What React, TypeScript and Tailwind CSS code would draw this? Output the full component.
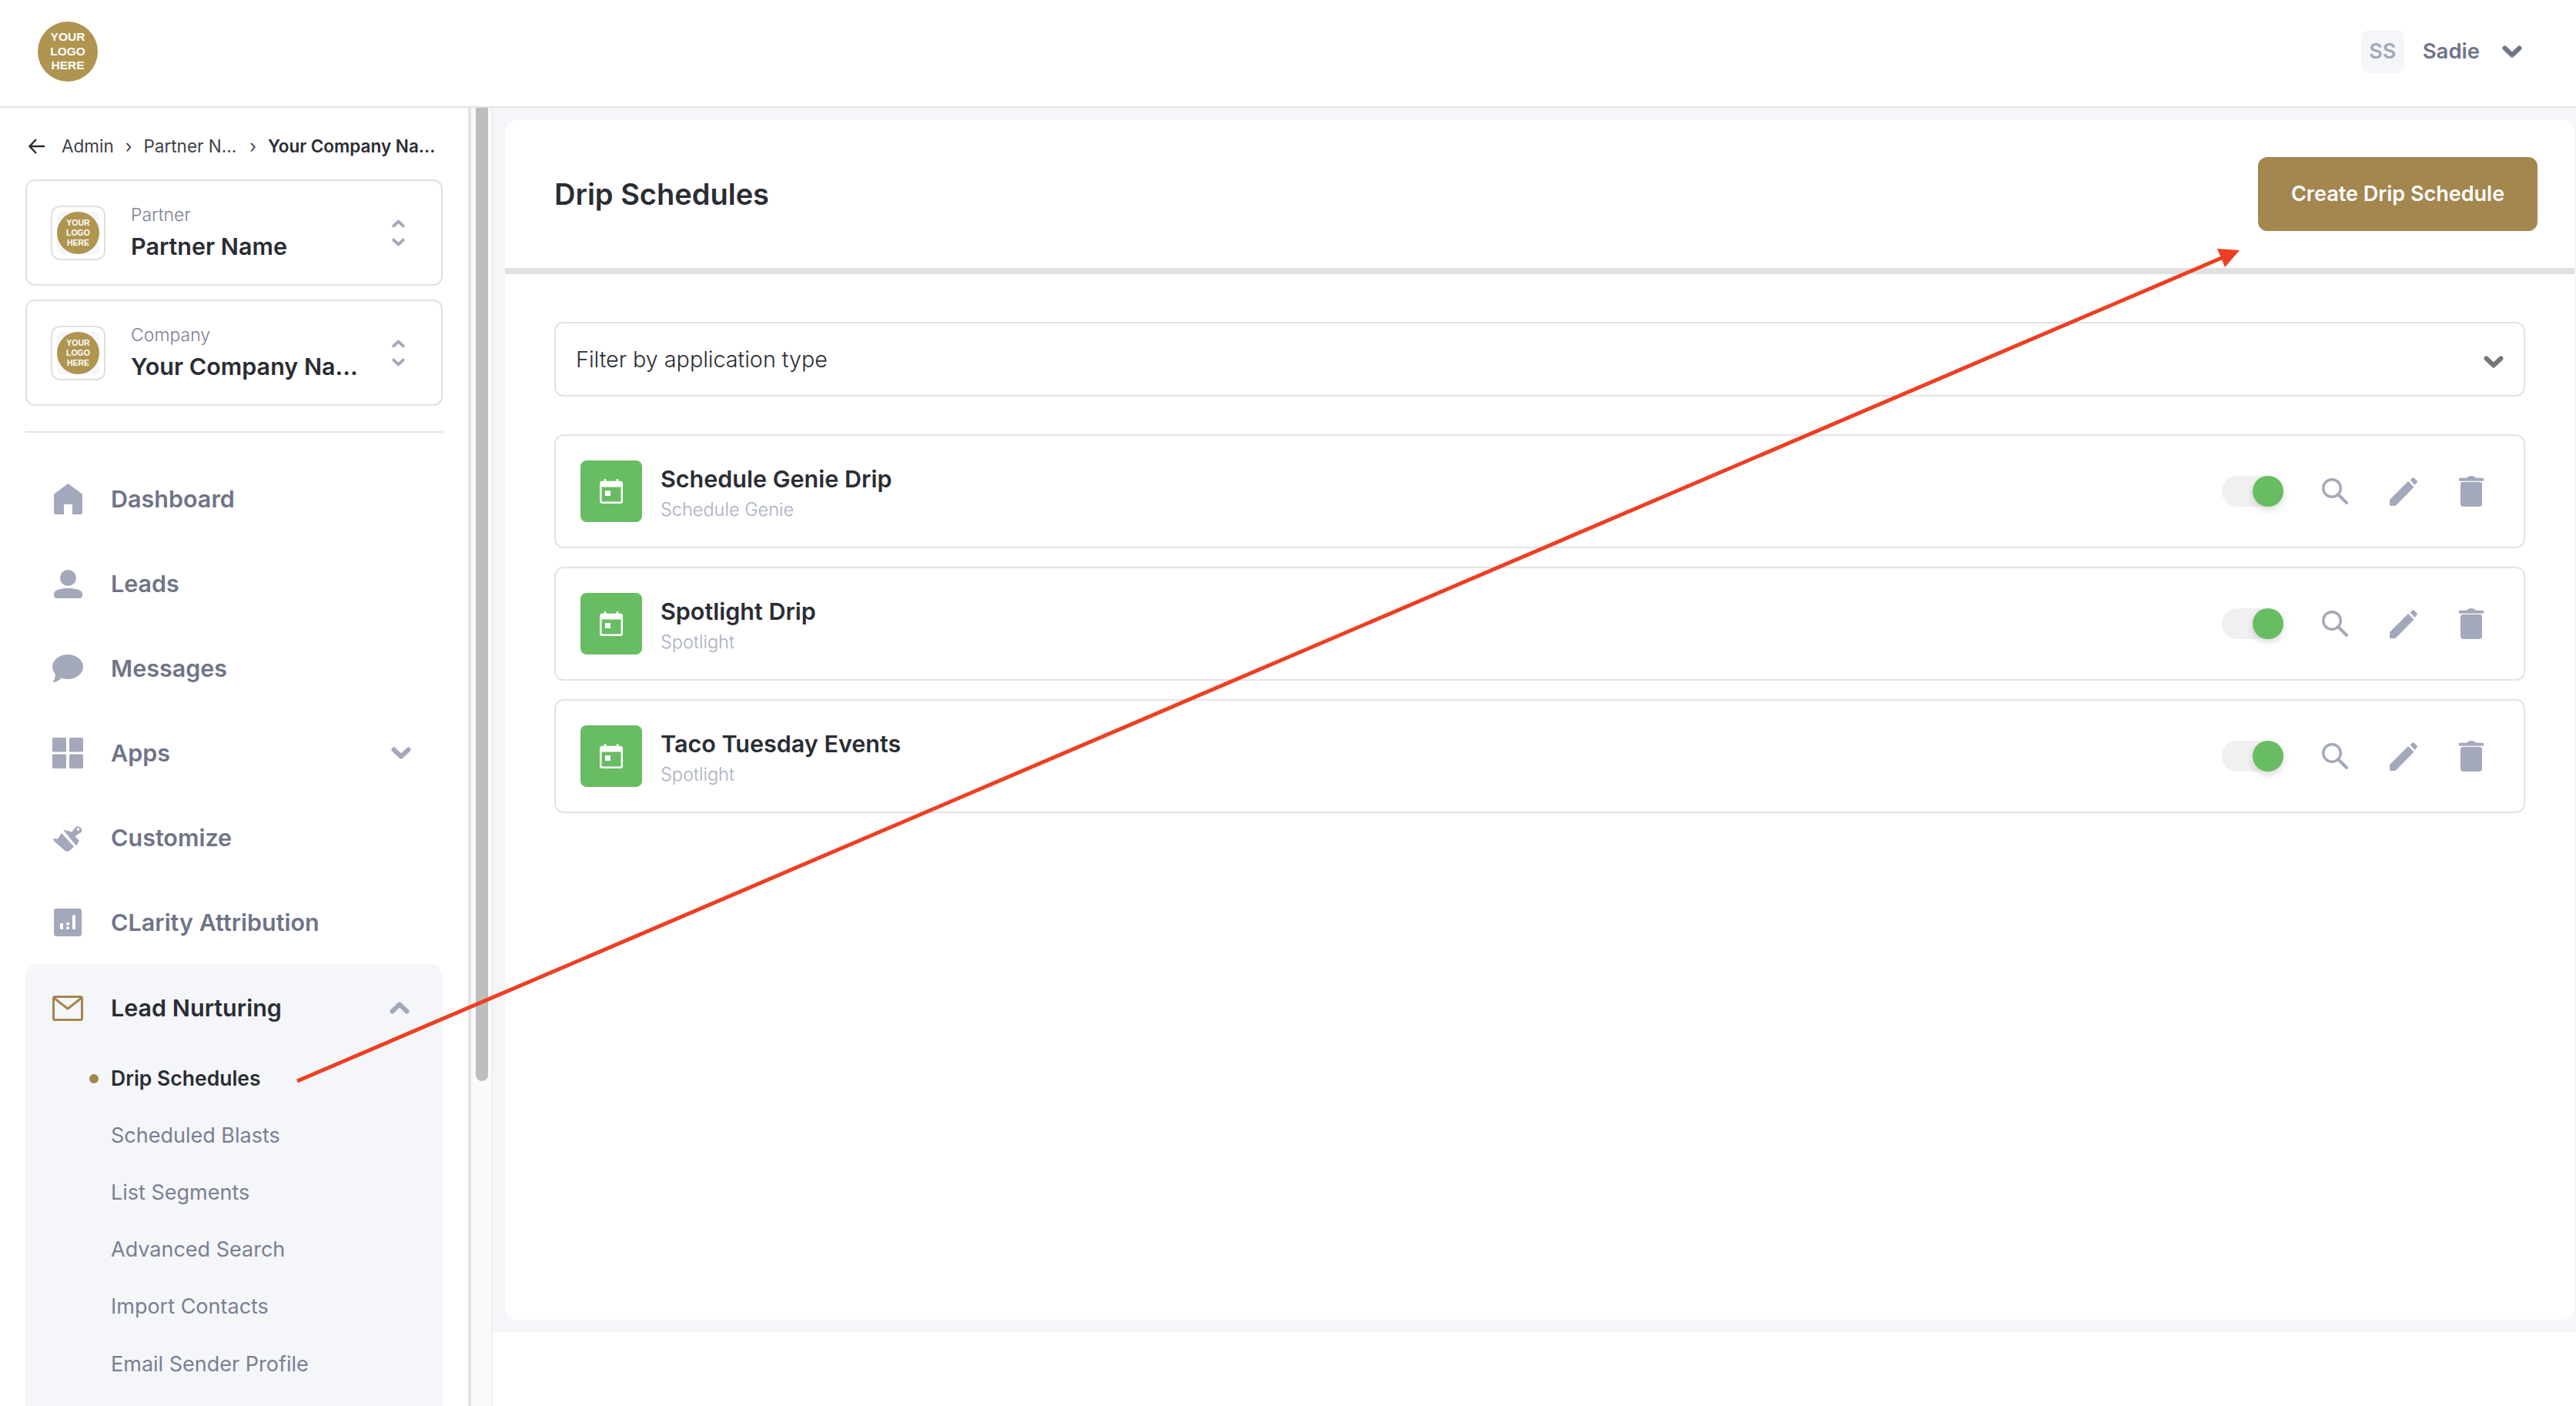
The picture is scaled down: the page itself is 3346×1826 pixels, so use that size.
const NAV_ITEMS = ['Dashboard', 'Leads', 'Messages', 'Apps', 'Customize', 'CLarity Attribution']
const SUB_ITEMS = ['Scheduled Blasts', 'List Segments', 'Advanced Search', 'Import Contacts', 'Email Sender Profile']
const DRIPS = [
  { title: 'Schedule Genie Drip', app: 'Schedule Genie' },
  { title: 'Spotlight Drip', app: 'Spotlight' },
  { title: 'Taco Tuesday Events', app: 'Spotlight' },
]

function Chevron({ className }: { className: string }) {
  return (
    <svg className={className} viewBox="0 0 26 16" fill="none" stroke="currentColor" strokeWidth="6" strokeLinecap="round" strokeLinejoin="round">
      <path d="M3.500 3.500 L13 12.500 L22.500 3.500" />
    </svg>
  )
}

function Logo({ small }: { small?: boolean }) {
  return (
    <div
      className={
        small
          ? "flex h-[55px] w-[55px] flex-col items-center justify-center rounded-full bg-[#b09550] font-['Liberation_Sans',sans-serif] text-[10.5px] leading-[13px] font-bold text-white"
          : "flex h-[78px] w-[78px] flex-col items-center justify-center rounded-full bg-[#b09550] font-['Liberation_Sans',sans-serif] text-[15.5px] leading-[18.5px] font-bold text-white"
      }
    >
      <span>YOUR</span>
      <span>LOGO</span>
      <span>HERE</span>
    </div>
  )
}

function NavIcon({ name }: { name: string }) {
  if (name === 'Dashboard')
    return (
      <svg width="37" height="40" viewBox="0 0 37 40" fill="#a3a8ba">
        <path d="M18.500 0 L36 13 a2.500 2.500 0 0 1 1 2 V37.500 a2.500 2.500 0 0 1-2.500 2.500 H24 V27 H13 V40 H2.500 A2.500 2.500 0 0 1 0 37.500 V15 a2.500 2.500 0 0 1 1-2 Z" />
      </svg>
    )
  if (name === 'Leads')
    return (
      <svg width="37" height="37" viewBox="0 0 37 37" fill="#a3a8ba">
        <circle cx="18.500" cy="10.500" r="10.500" />
        <path d="M0 31 c0-4.500 8.500-7 18.500-7 s18.500 2.500 18.500 7 v2 a4 4 0 0 1-4 4 H4 a4 4 0 0 1-4-4 Z" />
      </svg>
    )
  if (name === 'Messages')
    return (
      <svg width="40" height="36" viewBox="0 0 40 36" fill="#a3a8ba">
        <ellipse cx="20" cy="16" rx="20" ry="16" />
        <path d="M4 23 L8 29 L12 31 C8 34 4 36 .5 36 C3 33 4 29 4 23 Z" />
      </svg>
    )
  if (name === 'Apps')
    return (
      <svg width="40" height="40" viewBox="0 0 40 40" fill="#a3a8ba">
        <rect width="18" height="18.500" rx="1.500" />
        <rect x="22" width="18" height="18.500" rx="1.500" />
        <rect y="21.500" width="18" height="18.500" rx="1.500" />
        <rect x="22" y="21.500" width="18" height="18.500" rx="1.500" />
      </svg>
    )
  if (name === 'Customize')
    return (
      <svg width="38" height="35" viewBox="0 0 38 35" fill="#a3a8ba">
        <path
          fillRule="evenodd"
          d="M13 6.500 L24 9.500 L30 2.500 a5.500 5.500 0 0 1 7 7 L28.500 15 L34 21 L30 27.500 Z M32.500 4.200 a1.800 1.800 0 1 0 .01 3.600 a1.800 1.800 0 0 0 -.01-3.600 Z"
        />
        <path d="M11 11 L27 28.500 L21 34 Q18 35.500 15.500 34 L1 21 Q-.5 19 1 18 L6 18.500 Z" />
      </svg>
    )
  return (
    <svg width="36" height="36" viewBox="0 0 36 36">
      <rect width="36" height="36" rx="3" fill="#a3a8ba" />
      <rect x="8" y="19" width="4" height="8" rx="1" fill="#fff" />
      <rect x="16" y="18" width="4" height="3.500" rx="1" fill="#fff" />
      <rect x="16" y="23.500" width="4" height="3.500" rx="1" fill="#fff" />
      <rect x="24" y="8.500" width="4" height="18.500" rx="1" fill="#fff" />
    </svg>
  )
}

function Switcher({ label, name }: { label: string; name: string }) {
  return (
    <div className="flex h-[138px] items-center rounded-[12px] border-2 border-[#e0e0e0] pr-[47px] pl-[31px]">
      <div className="flex h-[71px] w-[71px] shrink-0 items-center justify-center rounded-[12px] border-2 border-[#e0e0e0]">
        <div className="flex h-[55px] w-[55px] items-center justify-center rounded-[6px] bg-[#f4f6fa]">
          <Logo small />
        </div>
      </div>
      <div className="ml-[33px] flex flex-col pb-[2px]">
        <span className="text-[23px] leading-[28px] font-light text-[#7a7f92]">{label}</span>
        <span className="mt-[9px] text-[30.5px] leading-[36px] font-semibold text-[#2a2d33]">{name}</span>
      </div>
      <div className="ml-auto flex flex-col gap-[13px] text-[#a3a8ba]">
        <Chevron className="h-[11px] w-[17px] rotate-180" />
        <Chevron className="h-[11px] w-[17px]" />
      </div>
    </div>
  )
}

function DripRow({ title, app }: { title: string; app: string }) {
  return (
    <div className="flex h-[148px] items-center rounded-[12px] border-2 border-[#e3e3e3] pr-[52px] pl-[32px]">
      <div className="flex h-[80px] w-[80px] items-center justify-center rounded-[8px] bg-[#68bc62]">
        <svg width="30" height="32" viewBox="0 0 30 32" fill="none">
          <path d="M7 0 V5 M23 0 V5" stroke="#fff" strokeWidth="2.500" />
          <rect x="1.250" y="4" width="27.500" height="26.750" rx="2" stroke="#fff" strokeWidth="2.500" />
          <rect x="1" y="4" width="28" height="6.500" fill="#fff" />
          <rect x="7" y="15" width="7" height="7" fill="#fff" />
        </svg>
      </div>
      <div className="ml-[24px] flex flex-col pt-[4px]">
        <span className="text-[30.5px] leading-[38px] font-semibold text-[#2a2d33]">{title}</span>
        <span className="mt-[6px] text-[23.5px] leading-[30px] font-light text-[#a9aec2]">{app}</span>
      </div>
      <div className="ml-auto flex items-center">
        <div className="relative h-[40px] w-[80px] rounded-full bg-[#f0f0f0]">
          <div className="absolute top-0 right-0 h-[40px] w-[40px] rounded-full bg-[#68bc62] shadow-[0_4px_10px_rgba(0,0,0,0.15)]" />
        </div>
        <svg className="ml-[50px]" width="34" height="34" viewBox="0 0 34 34" fill="none" stroke="#a3a8ba">
          <circle cx="13" cy="13" r="11.300" strokeWidth="3.400" />
          <path d="M22.500 22.500 L32 32" strokeWidth="4" strokeLinecap="round" />
        </svg>
        <svg className="ml-[54px]" width="36" height="37" viewBox="0 0 36 37" fill="#a3a8ba">
          <path d="M0 29 L24 5 L31.500 12.500 L7.500 37 H0 Z" />
          <path d="M26.500 3.500 L29.500 .5 Q30.500 -.2 31.500 .5 L35.500 4.500 Q36.300 5.500 35.500 6.500 L32.500 10 Z" />
        </svg>
        <svg className="ml-[54px]" width="32" height="40" viewBox="0 0 32 40" fill="#a3a8ba">
          <path d="M1.500 2.800 H10 Q12 0 16 0 Q20 0 22 2.800 H30.500 a1.500 1.500 0 0 1 0 4 H1.500 a1.500 1.500 0 0 1 0-4 Z" />
          <path d="M2 11 a3 3 0 0 1 3-3 H27 a3 3 0 0 1 3 3 V36 a4 4 0 0 1-4 4 H6 a4 4 0 0 1-4-4 Z" />
        </svg>
      </div>
    </div>
  )
}

export default function App() {
  return (
    <div className="relative h-[1826px] w-[3346px] overflow-hidden bg-white font-['Inter',sans-serif]">
      <header className="flex h-[140px] items-center justify-between border-b-2 border-[#e3e3e3] pr-[70px] pb-[4px] pl-[49px]">
        <Logo />
        <div className="flex items-center">
          <div className="flex h-[56px] w-[56px] items-center justify-center rounded-[10px] bg-[#f4f6fa] text-[27px] font-semibold text-[#a3a8ba]">
            SS
          </div>
          <span className="ml-[24px] text-[27.5px] font-semibold text-[#6f7488]">Sadie</span>
          <Chevron className="ml-[29px] h-[16px] w-[26px] text-[#6f7488]" />
        </div>
      </header>

      <div className="flex h-[1686px]">
        <aside className="w-[608px] shrink-0 overflow-hidden px-[33px]">
          {/* Breadcrumb */}
          <div className="mt-[34px] flex h-[32px] items-center pl-[4px] text-[22.5px] whitespace-nowrap">
            <svg className="shrink-0" width="21" height="20" viewBox="0 0 21 20" fill="none" stroke="#2a2d33" strokeWidth="2.500">
              <path d="M21 10 H2 M10 1 L1.500 10 L10 19" />
            </svg>
            <span className="ml-[22px] text-[#3d4048]">Admin</span>
            <span className="ml-[15px] text-[#3d4048]">›</span>
            <span className="ml-[15px] text-[#3d4048]">Partner N...</span>
            <span className="ml-[17px] text-[#3d4048]">›</span>
            <span className="ml-[15px] font-semibold text-[#2a2d33]">Your Company Na...</span>
          </div>

          <div className="mt-[27px] flex flex-col gap-[18px]">
            <Switcher label="Partner" name="Partner Name" />
            <Switcher label="Company" name="Your Company Na..." />
          </div>

          <div className="mt-[33px] h-[2px] bg-[#e3e3e3]" />

          <nav className="mt-[31px] flex flex-col">
            {NAV_ITEMS.map((item) => (
              <div key={item} className="flex h-[110px] items-center pr-[41px] pl-[35px]">
                <div className="flex w-[40px] justify-center">
                  <NavIcon name={item} />
                </div>
                <span className="ml-[36px] text-[30.5px] font-semibold text-[#6f7488]">{item}</span>
                {item === 'Apps' && <Chevron className="ml-auto h-[16px] w-[26px] text-[#a3a8ba]" />}
              </div>
            ))}
          </nav>

          {/* Lead Nurturing group */}
          <div className="-mt-px h-[700px] rounded-[16px] bg-[#f4f6fa] pt-[37px] pr-[43px] pl-[35px]">
            <div className="flex h-[40px] items-center">
              <svg width="40" height="33" viewBox="0 0 40 33" fill="none" stroke="#a4864f" strokeWidth="3">
                <rect x="1.500" y="1.500" width="37" height="30" rx="2" />
                <path d="M2 3 L20 17 L38 3" />
              </svg>
              <span className="ml-[36px] text-[30.5px] font-semibold text-[#2a2d33]">Lead Nurturing</span>
              <Chevron className="ml-auto h-[16px] w-[26px] rotate-180 text-[#a3a8ba]" />
            </div>
            <div className="mt-[35px] flex flex-col">
              <div className="relative flex h-[74px] items-center pl-[76px] text-[26.5px] font-semibold text-[#2a2d33]">
                <span className="absolute left-[48px] h-[12px] w-[12px] rounded-full bg-[#a4864f]" />
                Drip Schedules
              </div>
              {SUB_ITEMS.map((item) => (
                <div key={item} className="flex h-[74.200px] items-center pl-[76px] text-[27px] text-[#7a7f92]">
                  {item}
                </div>
              ))}
            </div>
          </div>
        </aside>

        {/* Scrollbar */}
        <div className="w-[32px] shrink-0 border-r-2 border-l-4 border-[#f0f0f0] border-l-[#e3e3e3] bg-[#fafafa] pl-[6px]">
          <div className="h-[1264px] w-[16px] rounded-b-full bg-[#bdbdbd]" />
        </div>

        <main className="flex-1">
          <div className="h-[1590px] bg-[#f4f6fa] pt-[16px] pr-[2px] pb-[16px] pl-[16px]">
            <div className="flex h-full flex-col rounded-[16px] bg-white">
              <div className="flex h-[192px] shrink-0 items-center justify-between pr-[48px] pl-[64px]">
                <h1 className="text-[38px] font-semibold text-[#2a2d33]">Drip Schedules</h1>
                <button className="flex h-[96px] w-[363px] items-center justify-center rounded-[12px] bg-[#a4864f] text-[27px] font-semibold text-white">
                  Create Drip Schedule
                </button>
              </div>
              <div className="h-[8px] shrink-0 bg-[#e0e0e0]" />
              <div className="px-[64px] pt-[62px]">
                <div className="flex h-[97px] items-center justify-between rounded-[12px] border-2 border-[#e3e3e3] pr-[26px] pl-[26px]">
                  <span className="text-[28.700px] font-light text-[#2a2d33]">Filter by application type</span>
                  <Chevron className="mt-[6px] h-[16px] w-[26px] text-[#757575]" />
                </div>
                <div className="mt-[49px] flex flex-col gap-[24px]">
                  {DRIPS.map((d) => (
                    <DripRow key={d.title} title={d.title} app={d.app} />
                  ))}
                </div>
              </div>
            </div>
          </div>
        </main>
      </div>

      {/* Annotation arrow */}
      <svg className="pointer-events-none absolute inset-0" width="3346" height="1826" fill="#ee3f23">
        <path d="M386 1404 L2888 334" stroke="#ee3f23" strokeWidth="5" />
        <path d="M2909 325 L2880 323 L2890 347 Z" />
      </svg>
    </div>
  )
}
